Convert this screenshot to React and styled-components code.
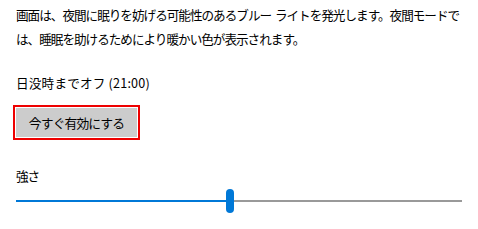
import React from "react";
import styled, { createGlobalStyle } from "styled-components";

const GlobalStyle = createGlobalStyle`
  html, body {
    margin: 0;
    padding: 0;
    background: #ffffff;
  }
  body {
    font-family: "Noto Sans CJK JP", "Noto Sans", sans-serif;
    color: #000000;
  }
`;

const Page = styled.div`
  width: 478px;
  height: 229px;
  box-sizing: border-box;
  padding: 3px 16px 0 16px;
  display: flex;
  flex-direction: column;
  overflow: hidden;
`;

const Description = styled.p`
  margin: 0;
  font-size: 12.6px;
  letter-spacing: -1px;
  word-spacing: 2px;
  line-height: 24px;
`;

const Status = styled.div`
  margin-top: 20px;
  font-size: 12.6px;
  letter-spacing: 0.2px;
  line-height: 24px;
`;

const ActionButton = styled.button`
  align-self: flex-start;
  margin-top: 13px;
  width: 121px;
  height: 29px;
  padding: 0;
  border: none;
  background: #cccccc;
  color: #000000;
  font-family: inherit;
  font-size: 12.8px;
  letter-spacing: -0.9px;
  outline: 2px solid #ee0000;
  outline-offset: 1px;
  cursor: pointer;
`;

const Label = styled.div`
  margin-top: 27px;
  font-size: 12.6px;
  letter-spacing: -1px;
  line-height: 24px;
`;

const Slider = styled.div`
  margin-top: 1px;
  height: 24px;
  display: flex;
  align-items: center;
`;

const Fill = styled.div`
  height: 2px;
  background: #0078d7;
`;

const Thumb = styled.div`
  width: 8px;
  height: 24px;
  border-radius: 4px;
  background: #0078d7;
  flex-shrink: 0;
`;

const Rest = styled.div`
  flex: 1;
  height: 2px;
  background: #999999;
`;

export default function App() {
  const trackWidth = 446 - 8;
  const value = 0.48;
  return (
    <>
      <GlobalStyle />
      <Page>
        <Description>
          画面は、夜間に眠りを妨げる可能性のあるブルー ライトを発光します。夜間モードでは、睡眠を助けるためにより暖かい色が表示されます。
        </Description>
        <Status>日没時までオフ (21:00)</Status>
        <ActionButton>今すぐ有効にする</ActionButton>
        <Label>強さ</Label>
        <Slider>
          <Fill style={{ width: `${Math.round(trackWidth * value)}px` }} />
          <Thumb />
          <Rest />
        </Slider>
      </Page>
    </>
  );
}
